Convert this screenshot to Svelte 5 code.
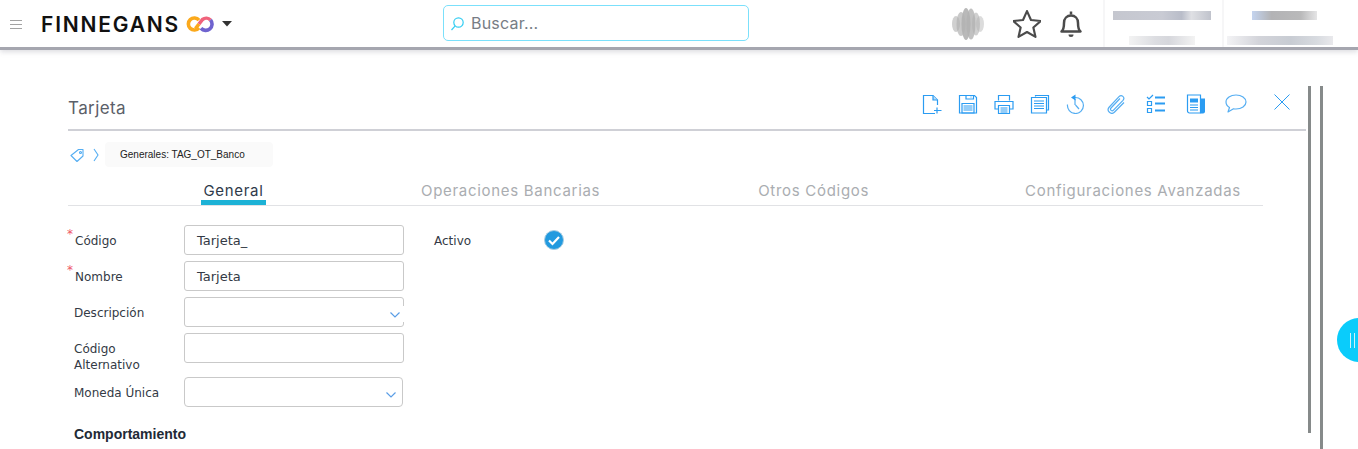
<script>
  const tabs = [
    { label: 'General', active: true },
    { label: 'Operaciones Bancarias' },
    { label: 'Otros Códigos' },
    { label: 'Configuraciones Avanzadas' }
  ];
</script>

<div class="page">
  <header class="topbar">
    <div class="brand">
      <svg class="burger" width="12" height="10" viewBox="0 0 12 10"><path d="M0 1.500h12M0 5.500h12M0 9.500h12" stroke="#a3a3a3" stroke-width="1.200" fill="none"/></svg>
      <span class="logo">FINNEGANS</span>
      <svg class="infinity" width="28" height="18" viewBox="0 0 28 18" fill="none" stroke-width="3.6">
        <path d="M13 5.200A6 6 0 1 0 13 12.800" stroke="#fba91c"/>
        <path d="M9.500 13.500L13 9" stroke="#fba91c"/>
        <path d="M13 9L16.500 4.500A6 6 0 0 1 24.500 5" stroke="#f0637c"/>
        <path d="M24.500 5A6 6 0 0 1 15 13.200" stroke="#6f63cf"/>
      </svg>
      <svg class="caret" width="10" height="6" viewBox="0 0 10 6"><path d="M0 0h10L5 5.500z" fill="#333"/></svg>
    </div>
    <div class="search">
      <svg width="15" height="15" viewBox="0 0 15 15" fill="none" stroke="#35cdf2" stroke-width="1.200"><circle cx="8.500" cy="6.500" r="4.700"/><path d="M5 10.200L1.500 14"/></svg>
      <span>Buscar...</span>
    </div>
    <div class="right">
      <svg class="orb" width="32" height="32" viewBox="0 0 32 32" fill="#9f9f9f" opacity=".8">
        <ellipse cx="4" cy="16" rx="4" ry="8" opacity=".6"/>
        <ellipse cx="9" cy="16" rx="4.500" ry="12" opacity=".7"/>
        <ellipse cx="14" cy="16" rx="4.500" ry="16" opacity=".9"/>
        <ellipse cx="19" cy="16" rx="4.500" ry="15.500" opacity=".8"/>
        <ellipse cx="24" cy="16" rx="4" ry="11.500" opacity=".6"/>
        <ellipse cx="28" cy="16" rx="4" ry="8" opacity=".45"/>
      </svg>
      <svg class="star" width="28" height="28" viewBox="2.500 1.500 25 26" fill="none" stroke="#4b4b4b" stroke-width="2"><path d="M15 2.500l3.700 8.300 9 .9-6.800 6 2 8.800L15 21.900l-7.900 4.600 2-8.800-6.800-6 9-.9z" stroke-linejoin="round"/></svg>
      <svg class="bell" width="24" height="28" viewBox="0 0 24 28" fill="none" stroke="#4b4b4b" stroke-width="2.500"><path d="M2.500 21.500c2.500-2 2.500-4.500 2.500-8.500 0-4.500 3-7.500 7-7.500s7 3 7 7.500c0 4 0 6.500 2.500 8.500z" stroke-linejoin="round"/><path d="M12 1.500v3"/><path d="M9.500 24.500a2.500 2.500 0 0 0 5 0z" fill="#4b4b4b" stroke="none"/></svg>
      <div class="user first">
        <i class="blur b1"></i>
        <i class="blur b2"></i>
      </div>
      <div class="user second">
        <i class="blur b3"></i>
        <i class="blur b4"></i>
      </div>
    </div>
  </header>

  <main class="card">
    <div class="title-row">
      <h1>Tarjeta</h1>
      <div class="tools">
        <svg width="20" height="20" viewBox="0 0 20 20" fill="none" stroke="#2b9cf2" stroke-width="1.200"><path d="M13 19.500H1.500V1.500h9.500l4.500 4.500v5"/><path d="M11 1.500v4.500h4.500" fill="#bcdcf7"/><path d="M15 13.500v6M12 16.500h7.500"/></svg>
        <svg width="20" height="20" viewBox="0 0 20 20" fill="none" stroke="#2b9cf2" stroke-width="1.200"><path d="M1.500 1.500h15l2 2v15.500h-17z"/><path d="M8 1.500v3.500h7.500v-3.500M12.500 3h1"/><path d="M4 9.500h12v9.500H4z"/><path d="M5.500 12h9M5.500 14h9M5.500 16h9"/></svg>
        <svg width="20" height="20" viewBox="0 0 20 20" fill="none" stroke="#2b9cf2" stroke-width="1.200"><path d="M4.500 6.500v-5h11v5"/><path d="M4 15H1v-7.500h18V15h-3"/><path d="M4.500 11.500h11v8h-11z"/><path d="M6.500 14h7M6.500 16h7M6.500 18h7"/></svg>
        <svg width="20" height="20" viewBox="0 0 20 20" fill="none" stroke="#2b9cf2" stroke-width="1.200"><path d="M5.500 2.500v-1h13v14.500h-2"/><path d="M1.500 3.500h15v15.500h-15z"/><path d="M4 7h10M4 9.500h10M4 12h10M4 14.500h10"/></svg>
        <svg width="20" height="20" viewBox="0 0 20 20" fill="none" stroke="#55aef2" stroke-width="1.200"><path d="M9 3.500a8 8 0 1 1-7.500 7"/><path d="M9 11V5M9.500 11l3.500 4"/><path d="M9.500 0.500L5 3.500l4.500 3z" fill="#2b9cf2" stroke="none"/></svg>
        <svg width="20" height="20" viewBox="0 0 20 20" fill="none" stroke="#55aef2" stroke-width="1.200"><path d="M14 4.500L5 14c-1.500 1.800 1 3.800 2.500 2.200L17 6.300c2.500-3-1.500-6.300-4-3.600L3.300 13c-3.500 4 2 8.500 5.300 5L18 8.500"/></svg>
        <svg width="20" height="20" viewBox="0 0 20 20" fill="none" stroke="#2b9cf2" stroke-width="1.200"><path d="M1 3l2 2 4-4"/><path d="M1.500 7.500h4v4h-4zM1.500 14.500h4v4h-4z"/><path d="M9 3.500h10M9 9.500h10M9 16.500h10" stroke-width="2"/></svg>
        <svg width="20" height="20" viewBox="0 0 20 20" fill="none" stroke="#2b9cf2" stroke-width="1.200"><path d="M1.500 1h13v18h-11a2 2 0 0 1-2-2z"/><path d="M15 4.500h4v13a2 2 0 0 1-2 2h-2.500z" fill="#2b9cf2" stroke="none"/><path d="M4 4.500h8v4H4z" fill="#2b9cf2" stroke="none"/><path d="M4 11h8M4 13.500h8M4 16h8"/></svg>
        <svg class="bubble" width="22" height="20" viewBox="0 0 22 20" fill="none" stroke="#55aef2" stroke-width="1.200"><path d="M11 1C5.500 1 1 4 1 8c0 2.300 1.300 4.300 3.500 5.500L3 18l5.500-3.200c.8.100 1.600.2 2.500.2 5.500 0 10-3 10-7s-4.500-7-10-7z" stroke-linejoin="round"/></svg>
        <svg class="close" width="16" height="16" viewBox="0 0 16 16" fill="none" stroke="#2b9cf2" stroke-width="1"><path d="M.5.500l15 15M15.500.500l-15 15"/></svg>
      </div>
    </div>

    <div class="crumbs">
      <svg width="16" height="14" viewBox="0 0 16 14" fill="none" stroke="#55aef2" stroke-width="1.100"><path d="M3 7.500L10.500 1.500h4.500v6.500L9 13.500z" stroke-linejoin="round"/><circle cx="12.500" cy="4.500" r="1"/></svg>
      <svg class="chev" width="6" height="14" viewBox="0 0 6 14" fill="none" stroke="#55aef2" stroke-width="1.100"><path d="M1 1l4 6-4 6"/></svg>
      <span class="crumb">Generales: TAG_OT_Banco</span>
    </div>

    <nav class="tabs">
      {#each tabs as t}
        <div class="tab" class:active={t.active}>{t.label}</div>
      {/each}
    </nav>

    <div class="form">
      <div class="col">
        <div class="row"><label class="req"><b>*</b>Código</label><div class="input">Tarjeta_</div></div>
        <div class="row"><label class="req"><b>*</b>Nombre</label><div class="input">Tarjeta</div></div>
        <div class="row"><label>Descripción</label>
          <div class="input sel"><svg width="10" height="6" viewBox="0 0 10 6" fill="none" stroke="#5b9ee6" stroke-width="1.200"><path d="M.5.500l4.500 4.500 4.500-4.500"/></svg></div>
        </div>
        <div class="row"><label class="two">Código Alternativo</label><div class="input"></div></div>
        <div class="row sixth"><label>Moneda Única</label>
          <div class="input sel narrow"><svg width="10" height="6" viewBox="0 0 10 6" fill="none" stroke="#5b9ee6" stroke-width="1.200"><path d="M.5.500l4.500 4.500 4.500-4.500"/></svg></div>
        </div>
        <h2>Comportamiento</h2>
      </div>
      <div class="side">
        <span>Activo</span>
        <svg width="20" height="20" viewBox="0 0 20 20"><circle cx="10" cy="10" r="9.500" fill="#229adf" stroke="#a9cde2"/><path d="M5 10.500l3.500 3.500 6.500-7" fill="none" stroke="#fff" stroke-width="2.200"/></svg>
      </div>
    </div>
  </main>

  <i class="scroll s1"></i>
  <i class="scroll s2"></i>
  <div class="handle"><span></span></div>
</div>

<style>
  :global(body) { margin: 0; background: #fff; overflow: hidden; }
  .page { position: relative; width: 1358px; height: 449px; overflow: hidden; font-family: "DejaVu Sans", sans-serif; color: #2e3440; }

  .topbar { height: 47px; display: flex; align-items: center; border-bottom: 3px solid #a5a6af; box-shadow: 0 2px 5px rgba(120,120,135,.25); box-sizing: content-box; position: relative; }
  .brand { display: flex; align-items: center; width: 443px; flex: none; }
  .burger { margin-left: 10px; }
  .logo { margin-left: 19px; font: 600 21px "Inter", sans-serif; letter-spacing: 1.800px; color: #111; padding-top: 2px; }
  .infinity { margin-left: 6px; }
  .caret { margin-left: 8px; }

  .search { width: 298px; height: 34px; border: 1px solid #7be0fb; border-radius: 5px; display: flex; align-items: center; gap: 6px; padding-left: 6px; box-sizing: content-box; margin-top: -1px; }
  .search span { font: 400 16px "Inter", sans-serif; color: #777d85; letter-spacing: .2px; }

  .right { display: flex; align-items: center; margin-left: 203px; flex: none; height: 100%; }
  .orb { width: 32px; height: 32px; }
  .star { margin-left: 29px; }
  .bell { margin-left: 18px; }
  .user { position: relative; height: 47px; border-left: 2px solid #f6f6f7; }
  .first { margin-left: 20px; width: 117px; }
  .second { width: 120px; }
  .blur { position: absolute; display: block; height: 9px; }
  .b1 { left: 8px; top: 11px; width: 98px; background: linear-gradient(90deg,#c5c7cf,#c9cbd4 50%,#b9bdc9 70%,#dfe0e4 80%,#c0c3cc); }
  .b2 { left: 24px; top: 36px; width: 66px; background: linear-gradient(90deg,#f3f3f3,#dcdde1 40%,#d6d7dc 60%,#f3f3f3); }
  .b3 { left: 28px; top: 11px; width: 65px; background: linear-gradient(90deg,#c4d4ef,#b3b3b5 30%,#b9b9ba 75%,#e5e5e6); }
  .b4 { left: 3px; top: 36px; width: 106px; background: linear-gradient(90deg,#f3f3f5,#d3d4da 30%,#c8ccd3 60%,#d8dbe0 85%,#e9e9ec); }

  .card { margin: 36px 52px 0 68px; }
  .title-row { height: 43px; border-bottom: 2px solid #cfd0d6; display: flex; justify-content: space-between; position: relative; }
  h1 { margin: 10px 0 0; font: 400 17px/24px "Inter", sans-serif; color: #5b6069; letter-spacing: .4px; }
  .tools { display: flex; gap: 16px; margin-top: 8px; margin-right: 16px; align-items: flex-start; }
  .tools svg:nth-child(6), .tools svg:nth-child(7), .tools svg:nth-child(8) { margin-left: 4px; }
  .tools .bubble { margin-left: 3px; }
  .tools .close { margin-left: 11px; }

  .crumbs { display: flex; align-items: center; margin-top: 11px; height: 25px; }
  .chev { margin-left: 9px; }
  .crumb { margin-left: 6px; width: 168px; height: 25px; padding-left: 15px; box-sizing: border-box; background: #fafafa; border-radius: 4px; font: 10px/25px "Liberation Sans", sans-serif; color: #222; }

  .tabs { width: 1195px; height: 27px; margin-top: 11px; border-bottom: 1px solid #e1e2e5; display: flex; box-sizing: content-box; }
  .tab { font: 400 15px/25px "Inter", sans-serif; color: #aaadb1; letter-spacing: .7px; box-sizing: border-box; height: 27px; text-align: center; white-space: nowrap; }
  .tab:nth-child(1) { margin-left: 133px; width: 65px; }
  .tab:nth-child(2) { margin-left: 155px; }
  .tab:nth-child(3) { margin-left: 158px; }
  .tab:nth-child(4) { margin-left: 156px; }
  .tab.active { color: #2f3a4a; border-bottom: 5px solid #1cb2d6; }

  .form { display: flex; margin-top: 19px; }
  .col { width: 336px; flex: none; }
  .row { display: flex; align-items: center; height: 30px; margin-bottom: 6px; }
  .sixth { margin-top: 14px; }
  label { width: 116px; flex: none; padding-left: 6px; padding-top: 2px; box-sizing: border-box; font-size: 12px; line-height: 15px; color: #333a45; position: relative; }
  .req { padding-left: 7px; }
  .req b { position: absolute; left: -1px; top: -4px; color: #ee5566; font-weight: 400; font-size: 12px; line-height: 12px; }
  .two { width: 90px; margin-right: 26px; align-self: flex-start; margin-top: 6px; line-height: 16px; }
  .input { width: 220px; height: 30px; box-sizing: border-box; border: 1px solid #c9c9c9; border-radius: 3px; padding: 1px 0 0 12px; font-size: 13px; line-height: 28px; color: #333a45; position: relative; }
  .sel svg { position: absolute; right: 3px; top: 14px; }
  .sel:not(.narrow)::after { content: ""; position: absolute; right: -1px; top: 8px; width: 1px; height: 16px; background: #fff; }
  .narrow { width: 219px; border-radius: 4px; }
  .narrow svg { right: 6px; top: 14px; }
  h2 { margin: 17px 0 0 6px; font: 700 14px/20px "Liberation Sans", sans-serif; color: #222a36; }

  .side { display: flex; align-items: center; height: 30px; margin-left: 30px; font-size: 12px; color: #333a45; }
  .side span { width: 110px; padding-top: 2px; }
  .side svg { margin-top: 0; }

  .scroll { position: absolute; display: block; width: 3px; top: 86px; background: #868a8a; }
  .s1 { left: 1308px; height: 347px; }
  .s2 { left: 1320px; height: 363px; }
  .handle { position: absolute; left: 1337px; top: 318px; width: 44px; height: 44px; border-radius: 50%; background: #0accfb; }
  .handle span { position: absolute; left: 13px; top: 15px; width: 5px; height: 15px; border-left: 1.500px solid #cdf3fd; border-right: 1.500px solid #cdf3fd; box-sizing: border-box; }
</style>
